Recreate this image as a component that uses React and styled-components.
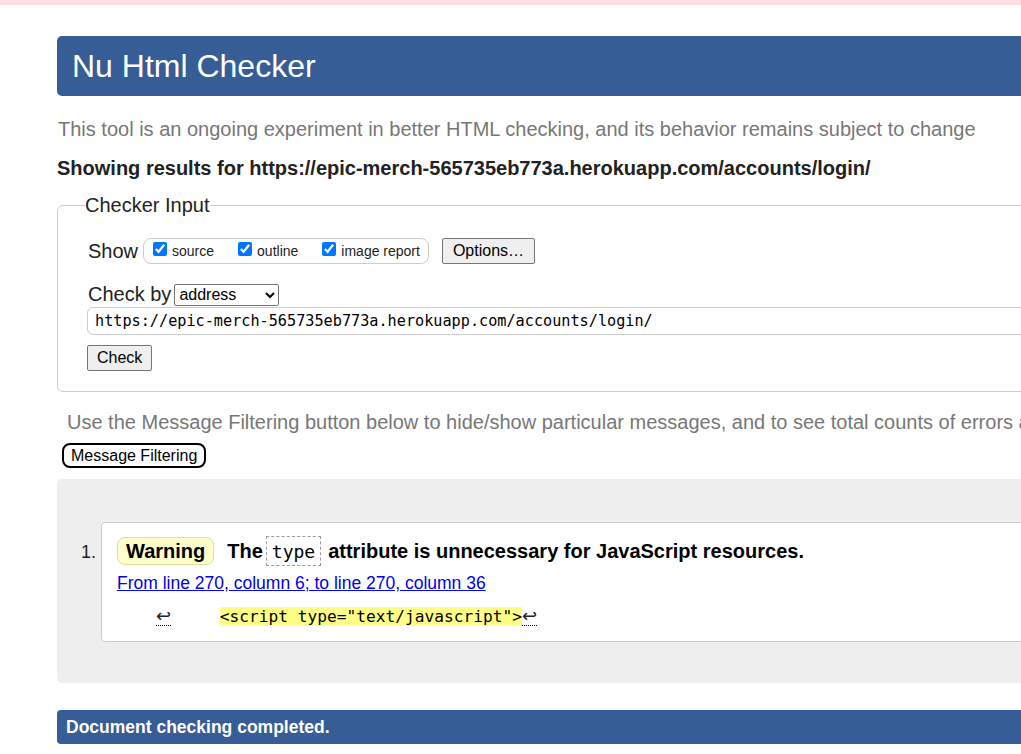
import React from 'react'
import styled, { createGlobalStyle } from 'styled-components'

const GlobalStyle = createGlobalStyle`
  html, body {
    margin: 0;
    padding: 0;
    overflow: hidden;
    background: #fff;
    font-family: "Liberation Sans", Arial, sans-serif;
    color: #222;
  }
`

const TopStrip = styled.div`
  height: 5px;
  background: #fddfe4;
`

const Main = styled.div`
  width: 1080px;
  margin-left: 57px;
  padding-top: 31px;
`

const Header = styled.h1`
  margin: 0;
  height: 60px;
  line-height: 60px;
  padding: 0 15px;
  background: #365d95;
  color: #fff;
  font-size: 32px;
  font-weight: normal;
  border-radius: 5px;
`

const Intro = styled.p`
  margin: 21px 0 0 1px;
  font-size: 20px;
  line-height: 24px;
  color: #777;
  white-space: nowrap;
`

const ResultsFor = styled.p`
  margin: 15px 0 0 0;
  font-size: 20px;
  line-height: 24px;
  font-weight: bold;
  color: #222;
  white-space: nowrap;
`

const Fieldset = styled.fieldset`
  margin: 14px 0 0 0;
  padding: 0 0 20px 30px;
  border: 1px solid #ccc;
  border-radius: 6px;
  min-width: 0;
`

const Legend = styled.legend`
  margin-left: -3px;
  padding: 0;
  font-size: 20px;
  line-height: 23px;
  color: #222;
`

const Row = styled.div`
  display: flex;
  align-items: center;
  margin-top: ${({ top }) => top}px;
  font-size: 20px;
  color: #222;
`

const Pill = styled.div`
  display: flex;
  align-items: center;
  gap: 24px;
  height: 24px;
  margin-left: 5px;
  padding: 0 8px 0 9px;
  border: 1px solid #ccc;
  border-radius: 8px;
`

const CheckLabel = styled.label`
  display: flex;
  align-items: center;
  font-size: 14px;
  line-height: 16px;
  color: #222;

  input {
    margin: 0 5px 4px 0;
    width: 14px;
    height: 14px;
    accent-color: #0075ff;
  }
`

const PlainButton = styled.button`
  font-family: "Liberation Sans", Arial, sans-serif;
  font-size: 16px;
  height: 26px;
  padding: 0 ${({ wide }) => (wide ? 10 : 9)}px;
  margin-left: ${({ left }) => left || 0}px;
  background: #efefef;
  color: #000;
  border: 1px solid #767676;
  border-radius: 2px;
`

const Select = styled.select`
  margin-left: 3px;
  width: 105px;
  height: 22px;
  font-family: "Liberation Sans", Arial, sans-serif;
  font-size: 16px;
  color: #000;
  background: #fff;
  border: 1px solid #767676;
  border-radius: 2px;
`

const UrlInput = styled.div`
  margin-top: 1px;
  margin-left: -1px;
  height: 26px;
  line-height: 26px;
  padding-left: 7px;
  border: 1px solid #ccc;
  border-radius: 6px;
  font-family: "DejaVu Sans Mono", monospace;
  font-size: 15.2px;
  color: #000;
`

const CheckRow = styled.div`
  margin-top: 10px;
  margin-left: -1px;
`

const FilterNote = styled.p`
  margin: 18px 0 0 10px;
  font-size: 20px;
  line-height: 24px;
  color: #777;
  white-space: nowrap;
`

const FilterButton = styled.button`
  margin: 9px 0 0 5px;
  height: 25px;
  padding: 0 7px;
  font-family: "Liberation Sans", Arial, sans-serif;
  font-size: 16px;
  color: #000;
  background: #fff;
  border: 2px solid #000;
  border-radius: 8px;
`

const Results = styled.div`
  margin-top: 11px;
  padding: 43px 0 41px 0;
  background: #eee;
  border-radius: 5px;
`

const MessageList = styled.ol`
  margin: 0;
  padding-left: 44px;
  font-size: 18px;
`

const Message = styled.li`
  padding: 13px 15px 14px 15px;
  background: #fff;
  border: 1px solid #ccc;
  border-radius: 4px;

  &::marker {
    color: #222;
  }
`

const Headline = styled.p`
  margin: 0;
  display: flex;
  align-items: center;
  font-size: 20px;
  font-weight: bold;
  color: #000;
  white-space: nowrap;
`

const Badge = styled.span`
  display: inline-block;
  height: 26px;
  line-height: 26px;
  padding: 0 8px;
  margin-right: 13px;
  background: #ffc;
  border: 1px solid #dddda0;
  border-radius: 8px;
`

const Code = styled.code`
  display: inline-block;
  margin: 0 7px 0 3px;
  padding: 0 5px;
  height: 28px;
  line-height: 30px;
  border: 1px dashed #999;
  font-family: "DejaVu Sans Mono", monospace;
  font-size: 18px;
  font-weight: normal;
`

const Location = styled.a`
  display: inline-block;
  margin-top: 7px;
  font-size: 17.5px;
  line-height: 20px;
  color: #00e;
  text-decoration: underline;
`

const Extract = styled.p`
  margin: 13px 0 0 39px;
  font-family: "DejaVu Sans Mono", monospace;
  font-size: 16.2px;
  line-height: 20px;
  color: #000;
  white-space: pre;
`

const Lf = styled.span`
  display: inline-block;
  border-bottom: 1px dotted #000;
  font-family: "DejaVu Sans", sans-serif;
  font-size: 18px;
  line-height: 18px;
  color: #222;
`

const Mark = styled.mark`
  background: #ff8;
  color: #000;
`

const Done = styled.p`
  margin: 27px 0 0 0;
  height: 34px;
  line-height: 34px;
  padding-left: 9px;
  background: #365d95;
  color: #fff;
  font-size: 17.5px;
  font-weight: bold;
  border-radius: 4px 0 0 4px;
`

export default function App() {
  const url = 'https://epic-merch-565735eb773a.herokuapp.com/accounts/login/'
  return (
    <>
      <GlobalStyle />
      <TopStrip />
      <Main>
        <Header>Nu Html Checker</Header>
        <Intro>This tool is an ongoing experiment in better HTML checking, and its behavior remains subject to change</Intro>
        <ResultsFor>Showing results for {url}</ResultsFor>

        <Fieldset>
          <Legend>Checker Input</Legend>
          <Row top={21}>
            Show
            <Pill>
              <CheckLabel><input type="checkbox" defaultChecked />source</CheckLabel>
              <CheckLabel><input type="checkbox" defaultChecked />outline</CheckLabel>
              <CheckLabel><input type="checkbox" defaultChecked />image report</CheckLabel>
            </Pill>
            <PlainButton left={13} wide>Options…</PlainButton>
          </Row>
          <Row top={19}>
            Check by
            <Select defaultValue="address">
              <option value="address">address</option>
            </Select>
          </Row>
          <UrlInput>{url}</UrlInput>
          <CheckRow>
            <PlainButton>Check</PlainButton>
          </CheckRow>
        </Fieldset>

        <FilterNote>Use the Message Filtering button below to hide/show particular messages, and to see total counts of errors and warnings.</FilterNote>
        <FilterButton>Message Filtering</FilterButton>

        <Results>
          <MessageList>
            <Message>
              <Headline>
                <Badge>Warning</Badge>
                The<Code>type</Code>attribute is unnecessary for JavaScript resources.
              </Headline>
              <Location href="#">From line 270, column 6; to line 270, column 36</Location>
              <Extract>
                <Lf>↩</Lf>{'     '}<Mark>{'<script type="text/javascript">'}</Mark><Lf>↩</Lf>
              </Extract>
            </Message>
          </MessageList>
        </Results>

        <Done>Document checking completed.</Done>
      </Main>
    </>
  )
}
